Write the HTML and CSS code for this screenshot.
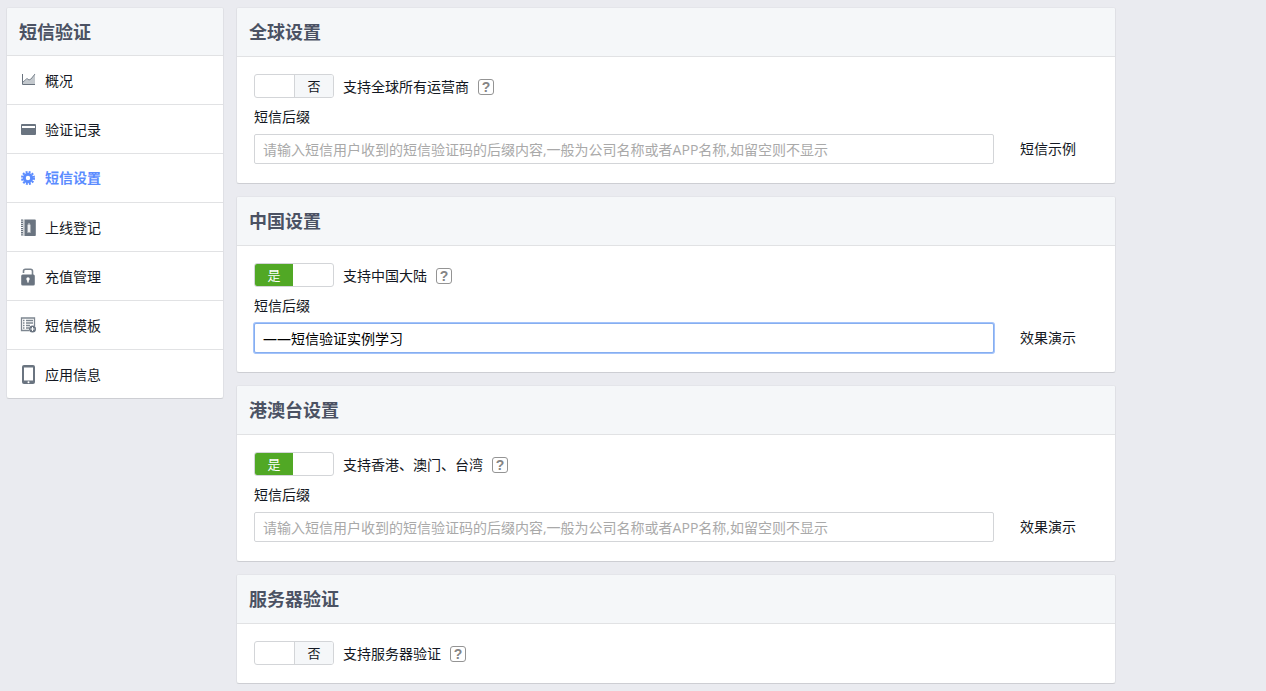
FILE: index.html
```html
<!DOCTYPE html>
<html lang="zh-CN">
<head>
<meta charset="utf-8">
<meta name="viewport" content="width=device-width, initial-scale=1">
<title>短信设置</title>
<link rel="stylesheet" href="styles.css">
</head>
<body>
<div class="page">
  <nav class="card sidebar" aria-label="短信验证">
    <h2 class="card-title">短信验证</h2>
    <ul class="menu">
      <li><a class="menu-link" href="#overview">
        <svg class="icon" viewBox="0 0 16 18"><path d="M3 12.500V10l4-3 3 1 5-6.500v11z" fill="#c3c8cd"/><path d="M3 10l4-3.500 2 1.500 2-1 4-5" fill="none" stroke="#7d8690"/><path d="M2.500 2v10.500H15" fill="none" stroke="#6a737e"/></svg>
        <span>概况</span></a></li>
      <li><a class="menu-link" href="#records">
        <svg class="icon" viewBox="0 0 16 18"><rect x="1" y="3" width="15" height="11" rx="1" fill="#6a7480"/><path d="M2 5h13v2H2z" fill="#fff"/></svg>
        <span>验证记录</span></a></li>
      <li><a class="menu-link active" href="#settings" aria-current="page">
        <svg class="icon" viewBox="0 0 16 18"><g transform="translate(8 9)" fill="none" stroke="#5b8cff"><circle r="3.700" stroke-width="3"/><circle r="6" stroke-width="2" stroke-dasharray="1.900 1.242"/></g></svg>
        <span>短信设置</span></a></li>
      <li><a class="menu-link" href="#launch">
        <svg class="icon" viewBox="0 0 16 18"><path d="M4.500 .5H15a.8.800 0 0 1 .8.800v15a.8.800 0 0 1-.8.800H4.500z" fill="#6a7480"/><path d="M2 .5v16.500" stroke="#6a7480" stroke-width="2" stroke-dasharray="1.300 0.800"/><path d="M4 .5v16.500" stroke="#a2a9b0"/><path d="M7.500 13.500V6.500L9 4l1.500 2.500v7z" fill="#eceef0" stroke="#a3a9b0"/></svg>
        <span>上线登记</span></a></li>
      <li><a class="menu-link" href="#recharge">
        <svg class="icon" viewBox="0 0 16 18"><path d="M3.500 5V3.200Q3.500 1.200 5.500 1.200h5q2 0 2 2V8" fill="none" stroke="#7b848e" stroke-width="1.600"/><rect x="1.200" y="6.500" width="13.600" height="11" rx="1.500" fill="#6a7480"/><circle cx="8" cy="11" r="1.700" fill="#fff"/><path d="M8 11v3.500" stroke="#fff" stroke-width="1.500"/></svg>
        <span>充值管理</span></a></li>
      <li><a class="menu-link" href="#templates">
        <svg class="icon" viewBox="0 0 16 18"><path d="M9 13.500H1.500V1h13v8" fill="none" stroke="#7d8690" stroke-width="1.300"/><path d="M3 3.500h1.500M6 3.500h7M3 6h1.500M6 6h7M3 8.500h1.500M6 8.500h4M3 11h1.500M6 11h3" stroke="#7d8690" stroke-width="1.500"/><circle cx="12.500" cy="12" r="3.500" fill="#6a7480"/><path d="M10.500 12h4M12.500 10v4" stroke="#fff"/></svg>
        <span>短信模板</span></a></li>
      <li><a class="menu-link" href="#app">
        <svg class="icon icon-tall" viewBox="0 0 16 20"><rect x="2" y="0" width="13" height="19" rx="2" fill="#6a7480"/><path d="M4 2.500h9v13H4z" fill="#fff"/><circle cx="8.500" cy="17.200" r="1" fill="#fff"/></svg>
        <span>应用信息</span></a></li>
    </ul>
  </nav>

  <main class="content">
    <section class="card">
      <h2 class="card-title">全球设置</h2>
      <div class="card-body">
        <div class="option">
          <span class="switch"><input type="checkbox" id="global"><span class="on">是</span><span class="off">否</span></span>
          <label for="global">支持全球所有运营商</label>
          <button class="help" type="button" aria-label="帮助">?</button>
        </div>
        <label class="field-label" for="global-suffix">短信后缀</label>
        <div class="field">
          <input class="text" id="global-suffix" type="text" placeholder="请输入短信用户收到的短信验证码的后缀内容,一般为公司名称或者APP名称,如留空则不显示">
          <a class="demo" href="#global-demo">短信示例</a>
        </div>
      </div>
    </section>

    <section class="card">
      <h2 class="card-title">中国设置</h2>
      <div class="card-body">
        <div class="option">
          <span class="switch"><input type="checkbox" id="china" checked><span class="on">是</span><span class="off">否</span></span>
          <label for="china">支持中国大陆</label>
          <button class="help" type="button" aria-label="帮助">?</button>
        </div>
        <label class="field-label" for="china-suffix">短信后缀</label>
        <div class="field">
          <input class="text current" id="china-suffix" type="text" value="——短信验证实例学习">
          <a class="demo" href="#china-demo">效果演示</a>
        </div>
      </div>
    </section>

    <section class="card">
      <h2 class="card-title">港澳台设置</h2>
      <div class="card-body">
        <div class="option">
          <span class="switch"><input type="checkbox" id="hmt" checked><span class="on">是</span><span class="off">否</span></span>
          <label for="hmt">支持香港、澳门、台湾</label>
          <button class="help" type="button" aria-label="帮助">?</button>
        </div>
        <label class="field-label" for="hmt-suffix">短信后缀</label>
        <div class="field">
          <input class="text" id="hmt-suffix" type="text" placeholder="请输入短信用户收到的短信验证码的后缀内容,一般为公司名称或者APP名称,如留空则不显示">
          <a class="demo" href="#hmt-demo">效果演示</a>
        </div>
      </div>
    </section>

    <section class="card">
      <h2 class="card-title">服务器验证</h2>
      <div class="card-body compact">
        <div class="option">
          <span class="switch"><input type="checkbox" id="server"><span class="on">是</span><span class="off">否</span></span>
          <label for="server">支持服务器验证</label>
          <button class="help" type="button" aria-label="帮助">?</button>
        </div>
      </div>
    </section>
  </main>
</div>
</body>
</html>
```

FILE: styles.css
```css
* { box-sizing: border-box; }

body {
  margin: 0;
  background: #eaebf0;
  color: #141823;
  font: 14px/20px "Open Sans", "Noto Sans CJK SC", sans-serif;
}

.page {
  display: flex;
  align-items: flex-start;
  gap: 12px;
  max-width: 1116px;
  padding: 7px 0 7px 6px;
}

.sidebar { flex: 0 0 218px; }

.content {
  flex: 1;
  min-width: 0;
  display: flex;
  flex-direction: column;
  gap: 12px;
}

.card {
  background: #fff;
  border: 1px solid #dfe0e5;
  border-top-color: #e4e5ea;
  border-bottom-color: #cdced3;
  border-radius: 3px;
}

.card-title {
  margin: 0;
  padding: 12px;
  border-bottom: 1px solid #e1e2e4;
  border-radius: 2px 2px 0 0;
  background: #f5f7f9;
  color: #4b5263;
  font-size: 18px;
  line-height: 24px;
  font-weight: 700;
}

.sidebar .card-title { padding-bottom: 11px; }

.menu {
  margin: 0;
  padding: 0;
  list-style: none;
}

.menu li + li { border-top: 1px solid #e1e2e4; }

.menu-link {
  display: flex;
  align-items: center;
  gap: 9px;
  height: 48px;
  padding: 2px 0 0 13px;
  color: inherit;
  text-decoration: none;
}

.menu-link.active {
  padding-top: 0;
  color: #5b8cff;
  font-weight: 700;
}

.icon { width: 16px; height: 18px; }
.icon-tall { height: 20px; }

.card-body { padding: 17px 39px 19px 17px; }
.card-body.compact { padding-bottom: 16px; }

.option {
  display: flex;
  align-items: center;
  height: 26px;
}

.switch {
  position: relative;
  display: flex;
  align-self: flex-start;
  width: 80px;
  height: 24px;
  margin-right: 9px;
  border: 1px solid #d3d5d8;
  border-radius: 3px;
  overflow: hidden;
  font-size: 13px;
  line-height: 22px;
  text-align: center;
}

.switch input {
  position: absolute;
  inset: 0;
  margin: 0;
  opacity: 0;
  cursor: pointer;
}

.on { width: 38px; background: #51a825; color: #fff; }
.off { width: 39px; margin-left: auto; border-left: 1px solid #d3d5d8; background: #f5f7f9; }
.switch input:not(:checked) ~ .on,
.switch input:checked ~ .off { display: none; }

.help {
  width: 16px;
  height: 16px;
  margin-left: 9px;
  padding: 0;
  border: 1px solid #949494;
  border-radius: 3px;
  background: #fff;
  color: #858585;
  font: 700 14px/14px "Liberation Sans", sans-serif;
}

.field-label {
  display: block;
  padding: 7px 0;
}

.field {
  display: flex;
  align-items: center;
  gap: 26px;
}

.text {
  flex: 1;
  min-width: 0;
  height: 30px;
  padding: 0 8px;
  border: 1px solid #d3d5d8;
  border-radius: 2px;
  background: #fff;
  color: #000;
  font: inherit;
}

.text::placeholder { color: #a9a9a9; opacity: 1; }

.text.current,
.text:focus {
  border-color: #86aef0;
  outline: 0;
  box-shadow: 0 0 0 1px #a3c3fa;
}

.demo { color: inherit; text-decoration: none; }
```
